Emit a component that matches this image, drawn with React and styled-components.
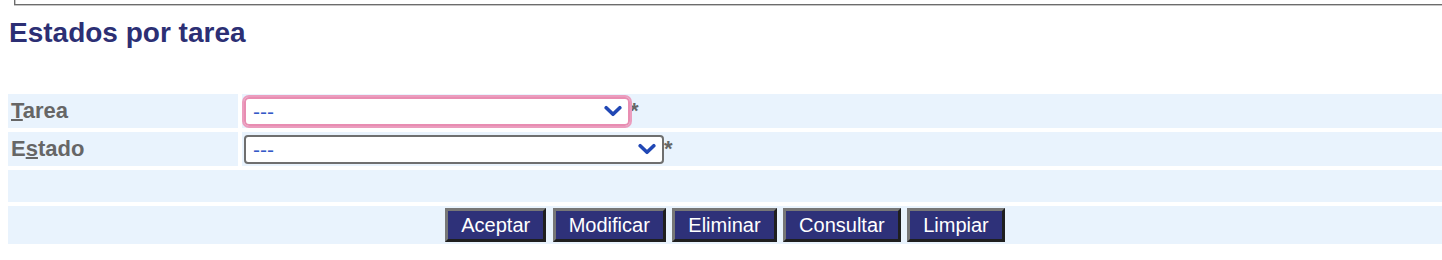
import React from "react";
import styled, { createGlobalStyle } from "styled-components";

const GlobalStyle = createGlobalStyle`
  html, body { margin: 0; padding: 0; background: #ffffff; }
  body { font-family: "Liberation Sans", Arial, sans-serif; }
`;

const Page = styled.div`
  padding-left: 8px;
`;

const TopFrame = styled.div`
  height: 4px;
  margin-left: 6px;
  border-left: 1px solid #6c6c6c;
  border-bottom: 1px solid #6c6c6c;
  box-shadow: inset 1px 0 0 #c6c6c6, 0 1px 0 #c6c6c6;
`;

const Title = styled.h1`
  margin: 12px 0 0 1px;
  font-size: 28px;
  line-height: 32px;
  font-weight: bold;
  color: #2c2f74;
`;

const FormGrid = styled.div`
  margin-top: 45px;
  display: grid;
  grid-template-columns: 230px 1fr;
  grid-template-rows: 34px 34px 32px 38px;
  gap: 4px;
`;

const Cell = styled.div`
  background: #e9f3fd;
  display: flex;
  align-items: center;
`;

const LabelCell = styled(Cell)`
  padding: 0 0 2px 3px;
  font-size: 22px;
  line-height: 25px;
  font-weight: bold;
  color: #666666;
  u {
    text-decoration-thickness: 2px;
  }
`;

const ValueCell = styled(Cell)`
  padding-left: 2px;
`;

const FullRow = styled(Cell)`
  grid-column: 1 / -1;
  justify-content: center;
  gap: 6.5px;
`;

const SelectWrap = styled.div`
  position: relative;
  width: ${(p) => p.$width}px;
  height: 29px;
  flex: none;
`;

const Select = styled.select`
  appearance: none;
  -webkit-appearance: none;
  box-sizing: border-box;
  width: 100%;
  height: 100%;
  margin: 0;
  padding: 0 32px 0 7px;
  border: 2px solid ${(p) => (p.$focused ? "#e88db2" : "#6f6f6f")};
  outline: ${(p) => (p.$focused ? "2px solid #eb9dbe" : "none")};
  border-radius: ${(p) => (p.$focused ? "5px" : "4px")};
  background: #ffffff;
  color: #3559c7;
  font-family: "Liberation Sans", Arial, sans-serif;
  font-size: 21px;
`;

const Chevron = styled.svg`
  position: absolute;
  right: 8px;
  top: 50%;
  transform: translateY(-50%);
  width: 18px;
  height: 11px;
  pointer-events: none;
`;

const Required = styled.span`
  align-self: flex-start;
  margin-top: 4px;
  font-size: 22px;
  line-height: 25px;
  font-weight: bold;
  color: #666666;
`;

const ActionButton = styled.button`
  box-sizing: border-box;
  height: 34px;
  padding: 0 13px;
  margin: 0;
  border: 3px solid;
  border-color: #777777 #1f1f1f #1f1f1f #777777;
  border-radius: 0;
  background: #2e3179;
  color: #ffffff;
  font-family: "Liberation Sans", Arial, sans-serif;
  font-size: 20px;
  line-height: 24px;
  cursor: pointer;
`;

function SelectField({ width, focused }) {
  return (
    <SelectWrap $width={width}>
      <Select $focused={focused} defaultValue="">
        <option value="">---</option>
      </Select>
      <Chevron viewBox="0 0 18 11" aria-hidden="true">
        <polyline
          points="2.2,2.2 9,8.8 15.8,2.2"
          fill="none"
          stroke="#2148b5"
          strokeWidth="3.6"
          strokeLinecap="round"
          strokeLinejoin="round"
        />
      </Chevron>
    </SelectWrap>
  );
}

const buttons = ["Aceptar", "Modificar", "Eliminar", "Consultar", "Limpiar"];

export default function App() {
  return (
    <>
      <GlobalStyle />
      <Page>
        <TopFrame />
        <Title>Estados por tarea</Title>
        <FormGrid>
          <LabelCell>
            <span>
              <u>T</u>area
            </span>
          </LabelCell>
          <ValueCell>
            <SelectField width={386} focused />
            <Required>*</Required>
          </ValueCell>
          <LabelCell>
            <span>
              E<u>s</u>tado
            </span>
          </LabelCell>
          <ValueCell>
            <SelectField width={420} />
            <Required>*</Required>
          </ValueCell>
          <FullRow />
          <FullRow>
            {buttons.map((b) => (
              <ActionButton key={b} type="button">
                {b}
              </ActionButton>
            ))}
          </FullRow>
        </FormGrid>
      </Page>
    </>
  );
}
